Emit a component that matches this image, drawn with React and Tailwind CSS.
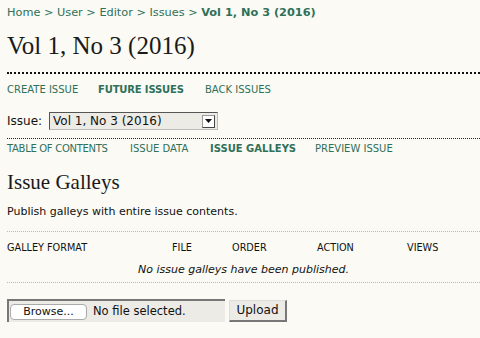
export default function App() {
  const sans = { fontFamily: '"DejaVu Sans", Verdana, sans-serif' };
  const serif = { fontFamily: '"Liberation Serif", Georgia, serif' };
  return (
    <div className="w-[480px] h-[338px] bg-[#fbfaf4] overflow-hidden text-[#111]" style={sans}>
      <div className="pl-[7px] pt-[6px]">
        <div className="text-[11.3px] leading-[14px] text-[#2f705a]">
          Home &gt; User &gt; Editor &gt; Issues &gt; <span className="font-bold">Vol 1, No 3 (2016)</span>
        </div>
        <h1 className="mt-[11px] text-[25px] leading-[29px] text-[#1a1a1a]" style={serif}>Vol 1, No 3 (2016)</h1>
        <div className="mt-[12px] border-t-2 border-dotted border-[#111]" />
        <div className="mt-[9px] flex text-[10px] leading-[13px] text-[#2f705a]">
          <span className="w-[91px]">CREATE ISSUE</span>
          <span className="w-[107px] font-bold tracking-[-0.15px]">FUTURE ISSUES</span>
          <span>BACK ISSUES</span>
        </div>
        <div className="mt-[16px] flex items-center h-[18px]">
          <span className="text-[12px] text-[#111]">Issue:</span>
          <div className="ml-[7px] w-[169px] h-[18px] flex items-center bg-[#ecebe6] border border-[#555] border-r-[#bbb] border-b-[#bbb]">
            <span className="flex-1 pl-[3px] text-[12px] leading-[14px] text-[#111]">Vol 1, No 3 (2016)</span>
            <div className="w-[13px] h-[13px] mr-[2px] bg-white border border-[#999] border-r-[#444] border-b-[#444] flex items-center justify-center">
              <svg width="7" height="5" viewBox="0 0 7 5"><path d="M0 0h7L3.5 4z" fill="#111" /></svg>
            </div>
          </div>
        </div>
        <div className="mt-[8px] border-t border-dotted border-[#222]" />
        <div className="mt-[3px] flex text-[10px] leading-[13px] text-[#2f705a]">
          <span className="w-[123px] tracking-[-0.3px]">TABLE OF CONTENTS</span>
          <span className="w-[80px]">ISSUE DATA</span>
          <span className="w-[105px] font-bold">ISSUE GALLEYS</span>
          <span>PREVIEW ISSUE</span>
        </div>
        <h2 className="mt-[15px] text-[21px] leading-[24px] text-[#1a1a1a]" style={serif}>Issue Galleys</h2>
        <p className="mt-[11px] text-[11px] leading-[14px]">Publish galleys with entire issue contents.</p>
      </div>
      <div className="pl-[7px] mt-[12px]">
        <div className="border-t border-dotted border-[#bbb]" />
        <div className="flex text-[9.7px] leading-[13px] pt-[9px] h-[30px]">
          <span className="w-[165px]">GALLEY FORMAT</span>
          <span className="w-[60px]">FILE</span>
          <span className="w-[85px]">ORDER</span>
          <span className="w-[90px]">ACTION</span>
          <span>VIEWS</span>
        </div>
        <div className="text-center text-[11px] leading-[14px] italic h-[20px] pt-[1px]">No issue galleys have been published.</div>
        <div className="border-t border-dotted border-[#bbb]" />
        <div className="mt-[16px] flex items-center">
          <div className="w-[218px] h-[23px] bg-[#ecebe6] border-l-2 border-t-2 border-[#777] flex items-center">
            <div className="ml-[1px] w-[77px] h-[16px] bg-white border border-[#aaa] rounded-[4px] text-[11px] leading-[14px] text-center text-[#111]">Browse...</div>
            <span className="ml-[6px] text-[11.5px] text-[#111]">No file selected.</span>
          </div>
          <div className="ml-[4px] w-[58px] h-[22px] bg-[#ecebe6] border-r-2 border-b-2 border-[#777] border-l border-t border-l-[#ddd] border-t-[#ddd] text-[12px] leading-[18px] text-center text-[#111]">Upload</div>
        </div>
      </div>
    </div>
  );
}
